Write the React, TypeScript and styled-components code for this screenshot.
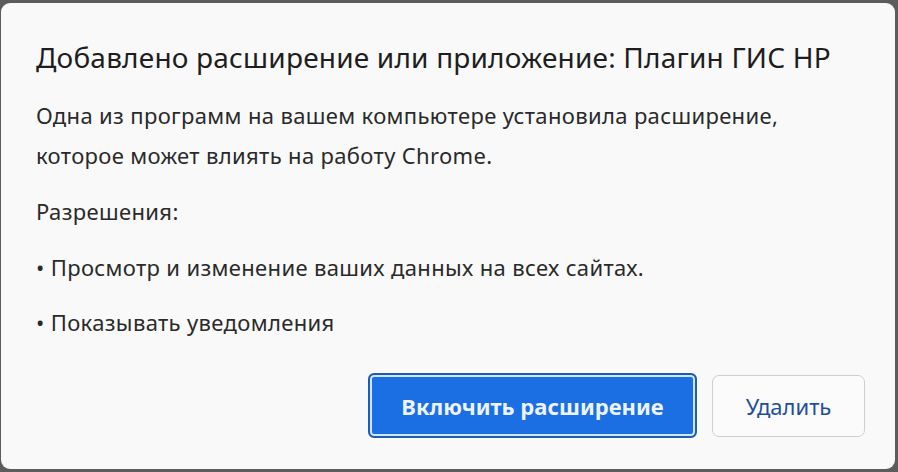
import { FC } from 'react';
import styled, { createGlobalStyle } from 'styled-components';

const GlobalStyle = createGlobalStyle`
    html, body {
        margin: 0;
        padding: 0;
        background: #5c5c5c;
    }
    body {
        font-family: "Noto Sans", "Open Sans", sans-serif;
    }
`;

const App: FC = () => {
    return (
        <>
            <GlobalStyle />
            <Dialog>
                <Title>Добавлено расширение или приложение: Плагин ГИС НР</Title>
                <Description>
                    Одна из программ на вашем компьютере установила расширение,
                    <br />
                    которое может влиять на работу Chrome.
                </Description>
                <Line $top={16}>Разрешения:</Line>
                <Line $top={16}>• Просмотр и изменение ваших данных на всех сайтах.</Line>
                <Line $top={15}>• Показывать уведомления</Line>
                <Actions>
                    <PrimaryButton>Включить расширение</PrimaryButton>
                    <SecondaryButton>Удалить</SecondaryButton>
                </Actions>
            </Dialog>
        </>
    );
};

export default App;

const Dialog = styled.div`
    box-sizing: border-box;
    width: 894px;
    height: 466px;
    margin: 3px 0 0 1px;
    padding: 36px 30px 0 35px;
    background: #f9f9f9;
    border-radius: 9px;
    display: flex;
    flex-direction: column;
`;

const Title = styled.div`
    font-size: 28px;
    line-height: 36px;
    letter-spacing: 0.2px;
    color: #1e1e1e;
    white-space: nowrap;
`;

const Description = styled.div`
    margin-top: 20px;
    font-size: 22px;
    line-height: 40px;
    letter-spacing: 0.35px;
    color: #2a2a2a;
`;

const Line = styled.div<{ $top: number }>`
    margin-top: ${(p) => p.$top}px;
    font-size: 22px;
    line-height: 40px;
    letter-spacing: 0.35px;
    color: #2a2a2a;
    white-space: nowrap;
`;

const Actions = styled.div`
    margin-top: 31px;
    display: flex;
    justify-content: flex-end;
    align-items: center;
    gap: 15px;
`;

const PrimaryButton = styled.button`
    box-sizing: border-box;
    width: 329px;
    height: 65px;
    border: 2px solid #1d5bb5;
    border-radius: 6px;
    background: #1b6fe2;
    box-shadow: inset 0 0 0 2px #cfe6ff;
    color: #eef4ff;
    font-family: "Noto Sans", "Open Sans", sans-serif;
    font-size: 22px;
    font-weight: 700;
    cursor: pointer;
`;

const SecondaryButton = styled.button`
    box-sizing: border-box;
    width: 153px;
    height: 62px;
    border: 1px solid #cfcfcf;
    border-radius: 7px;
    background: #fbfbfb;
    color: #1f4f9c;
    font-family: "Noto Sans", "Open Sans", sans-serif;
    font-size: 22px;
    cursor: pointer;
`;
